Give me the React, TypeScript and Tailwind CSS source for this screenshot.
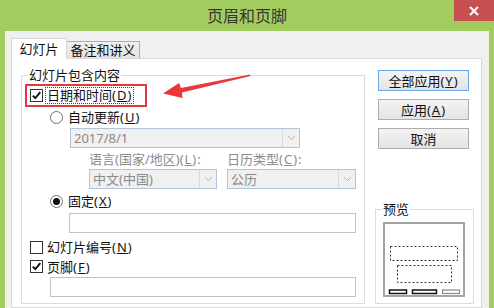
import React from 'react';

function Mn({ k }: { k: string }) {
  return (
    <span className="tracking-[1px]">
      (<u>{k}</u>)
    </span>
  );
}

function Checkbox({ checked }: { checked?: boolean }) {
  return (
    <span className="w-[13px] h-[13px] border border-[#333] bg-white flex items-center justify-center shrink-0">
      {checked && (
        <svg width="11" height="11" viewBox="0 0 11 11">
          <path d="M1.8 5.6 L4.3 8.2 L9.3 2.2" fill="none" stroke="#111" strokeWidth="1.9" />
        </svg>
      )}
    </span>
  );
}

function Radio({ checked }: { checked?: boolean }) {
  return (
    <span className="w-[13px] h-[13px] rounded-full border border-[#707070] bg-white flex items-center justify-center shrink-0">
      {checked && <span className="w-[7px] h-[7px] rounded-full bg-[#111]" />}
    </span>
  );
}

function Combo({ text, className }: { text: string; className: string }) {
  return (
    <div className={`h-[20px] border border-[#b4c4d7] bg-[#f0f0f0] flex ${className}`}>
      <span className="flex-1 pl-[3px] leading-[18px] text-[#8a8a8a]">{text}</span>
      <span className="w-[17px] border-l border-[#dadada] flex items-center justify-center">
        <svg width="9" height="6" viewBox="0 0 9 6">
          <path d="M1 1 L4.5 4.5 L8 1" fill="none" stroke="#b8b8b8" strokeWidth="1" />
        </svg>
      </span>
    </div>
  );
}

function Btn({ children, primary }: { children: React.ReactNode; primary?: boolean }) {
  return (
    <div
      className={`h-[21px] w-[91px] border flex items-center justify-center leading-[16px] bg-linear-to-b from-[#f3f3f3] to-[#e4e4e4] ${
        primary ? 'border-[#6aa8e6]' : 'border-[#adadad]'
      }`}
    >
      {children}
    </div>
  );
}

export default function App() {
  return (
    <div className="relative w-[494px] h-[308px] overflow-hidden bg-[#a2cc5e] flex flex-col font-['Noto_Sans','Noto_Sans_CJK_SC',sans-serif] text-[13px] text-[#111]">
      {/* title bar */}
      <div className="h-[31px] shrink-0 flex items-center justify-center relative">
        <span className="text-[16px] leading-[20px] text-[#363636]">页眉和页脚</span>
        <div className="absolute right-0 top-0 w-[40px] h-[21px] bg-[#c74f4f] flex items-center justify-center">
          <svg width="10" height="10" viewBox="0 0 10 10">
            <path d="M1 1 L9 9 M9 1 L1 9" stroke="#fff" strokeWidth="2" />
          </svg>
        </div>
      </div>

      {/* dialog body */}
      <div className="flex-1 mx-[5px] bg-[#f0f0f0] pt-[7px] pl-[6px] pr-[7px] flex flex-col">
        {/* tabs */}
        <div className="flex items-end h-[20px]">
          <div className="relative z-10 h-[21px] -mb-px w-[56px] bg-white border border-b-0 border-[#d9d9d9] flex items-center justify-center leading-[16px]">
            幻灯片
          </div>
          <div className="h-[17px] w-[73px] border border-b-0 border-l-0 border-[#adadad] bg-linear-to-b from-[#f0f0f0] to-[#e3e3e3] flex items-center justify-center leading-[16px]">
            备注和讲义
          </div>
        </div>

        {/* tab panel */}
        <div className="flex-1 bg-white border border-[#d9d9d9] pl-[9px] pt-[8px]">
          <div className="flex items-stretch">
            {/* left group */}
            <fieldset className="w-[344px] border border-[#dcdcdc] px-0">
              <legend className="ml-[6px] px-[1px] leading-[16px]">幻灯片包含内容</legend>
              <div className="flex flex-col pt-[2px] pb-[6px]">
                <div className="relative h-[21px] flex items-center gap-[3px] pl-[8px]">
                  <Checkbox checked />
                  <span className="leading-[15px] outline outline-1 outline-dotted outline-[#444] px-[1px]">
                    日期和时间<Mn k="D" />
                  </span>
                  <span className="absolute left-[3px] -top-[1px] w-[122px] h-[23px] border-2 border-[#e4393c]" />
                </div>
                <div className="h-[22px] flex items-center gap-[5px] pl-[28px]">
                  <Radio />
                  <span className="leading-[16px]">
                    自动更新<Mn k="U" />
                  </span>
                </div>
                <Combo text="2017/8/1" className="ml-[48px] w-[230px]" />
                <div className="h-[18px] mt-[2px] flex items-center pl-[67px] text-[#8c8c8c] leading-[16px]">
                  <span className="w-[138px]">
                    语言(国家/地区)<Mn k="L" />:
                  </span>
                  <span>
                    日历类型<Mn k="C" />:
                  </span>
                </div>
                <div className="flex gap-[10px] pl-[67px] mt-px">
                  <Combo text="中文(中国)" className="w-[128px]" />
                  <Combo text="公历" className="w-[129px]" />
                </div>
                <div className="h-[22px] flex items-center gap-[5px] pl-[28px] mt-px">
                  <Radio checked />
                  <span className="leading-[16px]">
                    固定<Mn k="X" />
                  </span>
                </div>
                <div className="ml-[47px] w-[287px] h-[20px] mt-px border border-[#c3c3c3] bg-white" />
                <div className="h-[20px] mt-[4px] flex items-center gap-[4px] pl-[8px]">
                  <Checkbox />
                  <span className="leading-[16px]">
                    幻灯片编号<Mn k="N" />
                  </span>
                </div>
                <div className="h-[19px] flex items-center gap-[4px] pl-[8px]">
                  <Checkbox checked />
                  <span className="leading-[16px]">
                    页脚<Mn k="F" />
                  </span>
                </div>
                <div className="ml-[28px] w-[306px] h-[20px] mt-px border border-[#c3c3c3] bg-white" />
              </div>
            </fieldset>

            {/* right column */}
            <div className="flex flex-col">
              <div className="ml-[13px] mt-[3px] flex flex-col gap-[8px]">
                <Btn primary>
                  全部应用<Mn k="Y" />
                </Btn>
                <Btn>
                  应用<Mn k="A" />
                </Btn>
                <Btn>取消</Btn>
              </div>
              <fieldset className="mt-auto ml-[10px] w-[99px] border border-[#dcdcdc] px-0">
                <legend className="ml-[6px] px-[1px] leading-[16px]">预览</legend>
                <div className="ml-[7px] mt-[5px] mb-[6px] w-[82px] h-[75px] border-2 border-[#a4a4a4] bg-white">
                  <svg width="78" height="71" viewBox="0 0 78 71">
                    <rect x="5.5" y="22.5" width="67" height="14" fill="none" stroke="#333" strokeWidth="1" strokeDasharray="2 2" />
                    <rect x="12.5" y="41.5" width="54" height="17" fill="none" stroke="#333" strokeWidth="1" strokeDasharray="2 2" />
                    <rect x="4.5" y="66" width="17" height="3.5" fill="#fff" stroke="#111" strokeWidth="1.5" />
                    <rect x="27.5" y="66" width="24" height="3.5" fill="#fff" stroke="#111" strokeWidth="1.5" />
                    <rect x="57.5" y="66" width="17" height="3.5" fill="#fff" stroke="#888" strokeWidth="1.2" />
                  </svg>
                </div>
              </fieldset>
            </div>
          </div>
        </div>
      </div>

      {/* annotation arrow */}
      <svg className="absolute inset-0 pointer-events-none" width="494" height="308" viewBox="0 0 494 308">
        <polygon
          points="163,93.5 179,83 181,88 250,74.5 250.5,76 182,92.5 182.5,98"
          fill="#e8383b"
        />
      </svg>
    </div>
  );
}
